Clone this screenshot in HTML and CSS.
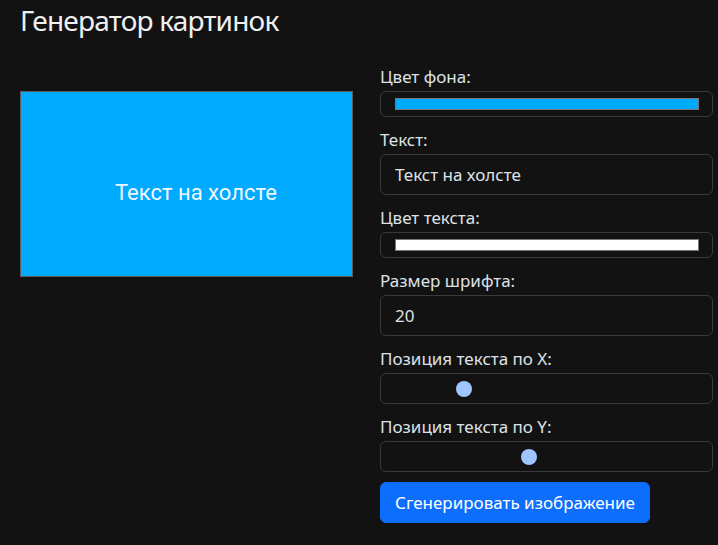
FILE: index.html
```html
<!DOCTYPE html>
<html lang="ru">
<head>
<meta charset="utf-8">
<title>Генератор картинок</title>
<link rel="stylesheet" href="styles.css">
</head>
<body>
<main class="page">
  <h1 class="title">Генератор картинок</h1>
  <div class="workspace">
    <div class="preview">
      <div class="canvas">
        <span class="canvas-text">Текст на холсте</span>
      </div>
    </div>
    <form class="controls">
      <div class="field">
        <label class="field-label" for="bg">Цвет фона:</label>
        <input class="input input-color" id="bg" type="color" value="#00aaff">
      </div>
      <div class="field">
        <label class="field-label" for="txt">Текст:</label>
        <input class="input input-text" id="txt" type="text" value="Текст на холсте">
      </div>
      <div class="field">
        <label class="field-label" for="fg">Цвет текста:</label>
        <input class="input input-color" id="fg" type="color" value="#ffffff">
      </div>
      <div class="field">
        <label class="field-label" for="size">Размер шрифта:</label>
        <input class="input input-text" id="size" type="number" value="20">
      </div>
      <div class="field">
        <label class="field-label" for="posx">Позиция текста по X:</label>
        <input class="input input-range" id="posx" type="range" min="0" max="1000" value="216">
      </div>
      <div class="field">
        <label class="field-label" for="posy">Позиция текста по Y:</label>
        <input class="input input-range" id="posy" type="range" min="0" max="1000" value="440">
      </div>
      <button class="btn-primary" type="button">Сгенерировать изображение</button>
    </form>
  </div>
</main>
</body>
</html>
```

FILE: styles.css
```css
* {
  box-sizing: border-box;
}

html,
body {
  margin: 0;
  background: #121212;
}

body {
  color: #dee2e6;
  font-family: "Noto Sans", "Open Sans", sans-serif;
  font-size: 17px;
}

.page {
  padding: 0 0 0 20px;
}

.title {
  margin: 0;
  font-size: 28px;
  line-height: 40px;
  letter-spacing: -0.8px;
  font-weight: 400;
  color: #eef0f2;
}

.workspace {
  display: grid;
  grid-template-columns: 333px 333px;
  column-gap: 27px;
  align-items: start;
  margin-top: 27px;
}

/* preview canvas */
.preview {
  padding-top: 24px;
}

.canvas {
  position: relative;
  height: 186px;
  background: #00aaff;
  border: 1px solid #5c5c5c;
}

.canvas-text {
  position: absolute;
  left: 94px;
  top: 86px;
  font-family: Roboto, "Liberation Sans", sans-serif;
  font-size: 22px;
  line-height: 30px;
  color: #eef8ff;
  white-space: nowrap;
}

/* form controls */
.controls {
  display: flex;
  flex-direction: column;
  margin: 0;
}

.field {
  display: flex;
  flex-direction: column;
  margin-bottom: 13px;
}

.field:last-of-type {
  margin-bottom: 10px;
}

.field-label {
  line-height: 20px;
  margin-bottom: 4px;
  color: #dee2e6;
}

.input {
  width: 100%;
  margin: 0;
  border: 1px solid #3a3a3a;
  border-radius: 6px;
  background: #121212;
  color: #dee2e6;
  font: inherit;
  outline: none;
}

.input-text {
  height: 41px;
  padding: 0 14px;
  line-height: 24px;
}

.input-text::-webkit-outer-spin-button,
.input-text::-webkit-inner-spin-button {
  -webkit-appearance: none;
  margin: 0;
}

.input-color {
  -webkit-appearance: none;
  appearance: none;
  height: 26px;
  padding: 6px 13px 6px 14px;
  cursor: pointer;
}

.input-color::-webkit-color-swatch-wrapper {
  padding: 0;
}

.input-color::-webkit-color-swatch {
  border: 1px solid #777;
  border-radius: 0;
}

.input-range {
  -webkit-appearance: none;
  appearance: none;
  height: 31px;
  padding: 0 12px;
}

.input-range::-webkit-slider-runnable-track {
  height: 16px;
  background: transparent;
  border: 0;
}

.input-range::-webkit-slider-thumb {
  -webkit-appearance: none;
  appearance: none;
  width: 16px;
  height: 16px;
  border: 0;
  border-radius: 50%;
  background: #9ec5fe;
}

.btn-primary {
  align-self: flex-start;
  height: 41px;
  padding: 0 14px;
  border: 1px solid #0d6efd;
  border-radius: 6px;
  background: #0d6efd;
  color: #fff;
  font: inherit;
  line-height: 24px;
  cursor: pointer;
}
```
